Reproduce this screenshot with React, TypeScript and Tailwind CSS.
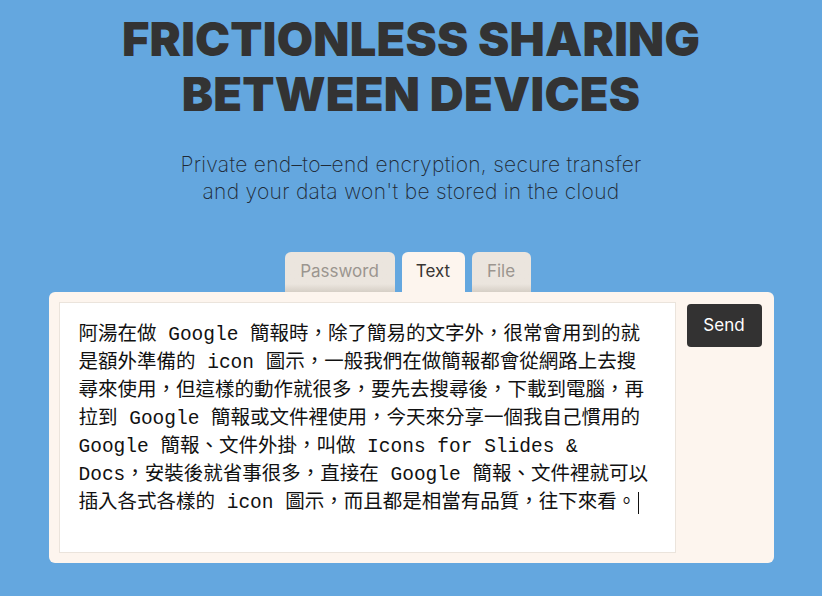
import React from "react";

const lines = [
  "阿湯在做 Google 簡報時，除了簡易的文字外，很常會用到的就",
  "是額外準備的 icon 圖示，一般我們在做簡報都會從網路上去搜",
  "尋來使用，但這樣的動作就很多，要先去搜尋後，下載到電腦，再",
  "拉到 Google 簡報或文件裡使用，今天來分享一個我自己慣用的",
  "Google 簡報、文件外掛，叫做 Icons for Slides &",
  "Docs，安裝後就省事很多，直接在 Google 簡報、文件裡就可以",
  "插入各式各樣的 icon 圖示，而且都是相當有品質，往下來看。",
];

export default function App() {
  return (
    <div className="w-[822px] h-[596px] bg-[#64a7df] overflow-hidden flex flex-col items-center">
      <h1
        className="mt-[11px] text-center text-[47px] leading-[55px] font-black text-[#333333] tracking-[0.2px]"
        style={{ fontFamily: "Inter, 'Noto Sans', sans-serif" }}
      >
        FRICTIONLESS SHARING
        <br />
        BETWEEN DEVICES
      </h1>
      <p
        className="mt-[30px] text-center text-[21px] leading-[27px] font-extralight text-[#1f2a36] tracking-[0.3px]"
        style={{ fontFamily: "Inter, 'Noto Sans', sans-serif" }}
      >
        Private end–to–end encryption, secure transfer
        <br />
        and your data won't be stored in the cloud
      </p>
      <div
        className="mt-[47px] flex gap-[7px] items-end ml-[-7px]"
        style={{ fontFamily: "Inter, 'Noto Sans', sans-serif" }}
      >
        <div className="w-[110px] h-[40px] rounded-t-[6px] bg-gradient-to-b from-[#ebe5de] from-80% to-[#d6cfc6] flex items-center justify-center text-[17px] text-[#9b958f]">
          Password
        </div>
        <div className="w-[63px] h-[40px] rounded-t-[6px] bg-[#fdf5ee] flex items-center justify-center text-[17px] text-[#3a3633]">
          Text
        </div>
        <div className="w-[59px] h-[40px] rounded-t-[6px] bg-gradient-to-b from-[#ebe5de] from-80% to-[#d6cfc6] flex items-center justify-center text-[17px] text-[#9b958f]">
          File
        </div>
      </div>
      <div className="w-[725px] h-[271px] bg-[#fdf5ee] rounded-[6px] p-[10px] pr-[12px] flex gap-[11px]">
        <div
          className="w-[617px] h-[251px] bg-white border border-[#ebe4dc] pl-[19px] pt-[18px] text-[19.5px] leading-[28px] text-[#111111]"
          style={{ fontFamily: "'Liberation Mono', 'Noto Sans CJK TC', monospace" }}
        >
          {lines.map((l, i) => (
            <div key={i} className="whitespace-pre">
              {l}
              {i === lines.length - 1 && (
                <span className="inline-block w-[1px] h-[22px] bg-[#111] align-middle ml-[2px]" />
              )}
            </div>
          ))}
        </div>
        <button
          className="mt-[2px] w-[75px] h-[43px] rounded-[4px] bg-[#333232] text-white text-[17px]"
          style={{ fontFamily: "Inter, 'Noto Sans', sans-serif" }}
        >
          Send
        </button>
      </div>
    </div>
  );
}
